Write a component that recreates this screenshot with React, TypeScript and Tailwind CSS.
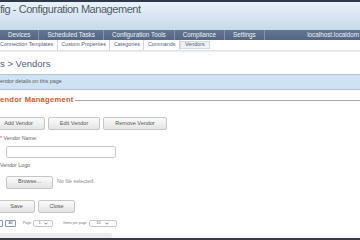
import React from 'react';

const navItems = ['Devices', 'Scheduled Tasks', 'Configuration Tools', 'Compliance', 'Settings'];
const subItems = ['Connection Templates', 'Custom Properties', 'Categories', 'Commands', 'Vendors'];

function Btn({ children, className = '' }: { children: React.ReactNode; className?: string }) {
  return (
    <button
      className={`h-[13px] shrink-0 rounded-[2px] border border-[#c6c6c6] bg-linear-to-b from-[#fbfbfb] to-[#e4e4e4] text-[5.5px] leading-none text-[#555] ${className}`}
    >
      {children}
    </button>
  );
}

function Chevron() {
  return (
    <svg width="4" height="3" viewBox="0 0 4 3" className="shrink-0">
      <path d="M0.5 0.7 L2 2.2 L3.5 0.7" fill="none" stroke="#666" strokeWidth="0.8" />
    </svg>
  );
}

const App: React.FC = () => {
  return (
    <div className="h-[240px] w-[360px] overflow-hidden bg-white font-['Liberation_Sans',Arial,sans-serif]">
      <div className="h-[2px] bg-[#2f3947]" />

      {/* title banner */}
      <div className="h-[28px] bg-linear-to-b from-[#e9f2f9] to-[#c6daeb] pt-[2px]">
        <div className="whitespace-nowrap text-[11px] leading-[10px] tracking-[-0.45px] text-[#535b66]">
          fig - Configuration Management
        </div>
      </div>

      {/* main nav */}
      <div className="flex h-[10px] items-stretch bg-linear-to-b from-[#627593] to-[#536683] text-[6.3px] leading-none text-[#eef2f7]">
        {navItems.map((item) => (
          <div key={item} className="flex shrink-0 items-center whitespace-nowrap border-r border-[#8494ad] px-[8px]">
            {item}
          </div>
        ))}
        <div className="flex flex-1 items-center justify-end whitespace-nowrap pr-[1px]">localhost.localdom</div>
      </div>

      {/* sub nav */}
      <div className="flex h-[11px] items-stretch border-b border-[#dde2e8] bg-white text-[5.4px] leading-none text-[#52627a] shadow-[0_1px_1px_rgba(0,0,0,0.06)]">
        {subItems.map((item) => (
          <div
            key={item}
            className={`flex shrink-0 items-center whitespace-nowrap border-r border-[#d3d8de] px-[3.5px] first:pl-0 ${
              item === 'Vendors' ? 'my-[1px] border border-[#d6dbe1] bg-[#eef1f5] px-[4px]' : ''
            }`}
          >
            {item}
          </div>
        ))}
      </div>

      {/* page heading */}
      <div className="h-[23px] pt-[8px]">
        <div className="whitespace-nowrap text-[9.5px] leading-[10px] text-[#51627a]">s &gt; Vendors</div>
      </div>

      {/* info bar */}
      <div className="flex h-[16px] items-center border-y border-[#b3c5d9] bg-[#cfe2f3]">
        <span className="whitespace-nowrap text-[5.4px] leading-none text-[#5a5f66]">endor details on this page</span>
      </div>

      {/* legend */}
      <div className="mt-[6px] flex h-[8px] items-center">
        <span className="shrink-0 whitespace-nowrap text-[7.5px] font-bold leading-[8px] tracking-[0.3px] text-[#d2572a]">
          endor Management
        </span>
        <div className="ml-[1px] h-px flex-1 bg-[#a8a8a8]" />
      </div>

      {/* action buttons */}
      <div className="mt-[13px] flex gap-[3px]">
        <Btn className="ml-[-8px] w-[53px]">Add Vendor</Btn>
        <Btn className="w-[52px]">Edit Vendor</Btn>
        <Btn className="w-[64px]">Remove Vendor</Btn>
      </div>

      {/* form */}
      <div className="mt-[5px] h-[7px] whitespace-nowrap text-[5.3px] leading-[7px] text-[#666]">
        <span className="text-[#d33]">*</span> Vendor Name:
      </div>
      <div className="ml-[6px] mt-[4px] h-[12px] w-[110px] rounded-[2px] border border-[#c9c9c9] bg-white" />

      <div className="mt-[4px] h-[7px] whitespace-nowrap text-[5.3px] leading-[7px] text-[#666]">Vendor Logo:</div>
      <div className="ml-[6px] mt-[7px] flex h-[12px] items-center gap-[4px]">
        <Btn className="h-[12px] w-[47px]">Browse...</Btn>
        <span className="whitespace-nowrap text-[5.3px] leading-none text-[#8a8a8a]">No file selected.</span>
      </div>

      <div className="mt-[12px] flex gap-[3px]">
        <Btn className="ml-[-2px] w-[37px]">Save</Btn>
        <Btn className="w-[37px]">Close</Btn>
      </div>

      {/* pagination */}
      <div className="mt-[7px] flex h-[7px] items-center text-[3.5px] leading-none text-[#777]">
        <div className="ml-[-4px] h-[7px] w-[7px] rounded-[1px] border border-[#7f9cc0] bg-white" />
        <div className="ml-[2px] flex h-[7px] w-[11px] items-center justify-center rounded-[1px] border border-[#7f9cc0] bg-white text-[#556]">
          All
        </div>
        <span className="ml-[7px]">Page</span>
        <div className="ml-[2px] flex h-[7px] w-[20px] items-center justify-center gap-[3px] rounded-[2px] border border-[#c8c8c8] bg-white text-[#555]">
          1 <Chevron />
        </div>
        <span className="ml-[10px] whitespace-nowrap">Items per page</span>
        <div className="ml-[2px] flex h-[7px] w-[28px] items-center justify-center gap-[4px] rounded-[2px] border border-[#c8c8c8] bg-white text-[#555]">
          10 <Chevron />
        </div>
      </div>

      {/* table top */}
      <div className="mt-[6px] h-[5px] bg-linear-to-b from-white to-[#f6f6f6]">
        <div className="h-[5px] w-[112px] rounded-tr-[2px] bg-[#ececec]" />
      </div>
      <div className="h-[2px] bg-[#353c47]" />
    </div>
  );
};

export default App;
